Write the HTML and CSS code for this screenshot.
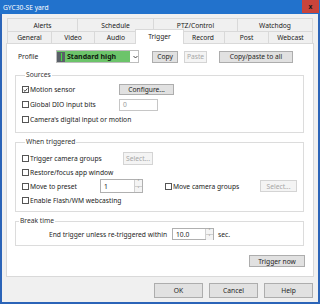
FILE: index.html
```html
<!DOCTYPE html>
<html>
<head>
<meta charset="utf-8">
<link rel="stylesheet" href="styles.css">
</head>
<body>
<div class="window">
  <div class="titlebar">
    <span class="title">GYC30-SE yard</span>
    <span class="close">x</span>
  </div>
  <div class="body">
    <div class="tabs">
      <div class="tabrow top">
        <div class="tab w70">Alerts</div>
        <div class="tab w76">Schedule</div>
        <div class="tab w84">PTZ/Control</div>
        <div class="tab w76 last">Watchdog</div>
      </div>
      <div class="tabrow bottom">
        <div class="tab w44">General</div>
        <div class="tab w43">Video</div>
        <div class="tab w43">Audio</div>
        <div class="tab w45 sel">Trigger</div>
        <div class="tab w42">Record</div>
        <div class="tab w44">Post</div>
        <div class="tab w45 last">Webcast</div>
      </div>
    </div>
    <div class="panel">
      <div class="profile-row">
        <span class="profile-label">Profile</span>
        <div class="combo">
          <div class="combo-sel">
            <span class="combo-icon"><span class="combo-icon-bar"></span></span>
            <span class="combo-text">Standard high</span>
          </div>
          <svg class="combo-arrow" width="5" height="4" viewBox="0 0 5 4"><path d="M0.5 1 L2.5 3 L4.5 1" fill="none" stroke="#333" stroke-width="0.9"/></svg>
        </div>
        <span class="btn b-copy">Copy</span>
        <span class="btn dis b-paste">Paste</span>
        <span class="btn b-all">Copy/paste to all</span>
      </div>

      <fieldset class="group g-sources">
        <legend>Sources</legend>
        <div class="row r15">
          <span class="chk w97"><span class="box checked"><svg width="6" height="6" viewBox="0 0 6 6"><path d="M0.8 3 L2.4 4.6 L5.2 1.2" fill="none" stroke="#222" stroke-width="1"/></svg></span>Motion sensor</span>
          <span class="btn b-conf">Configure...</span>
        </div>
        <div class="row r15">
          <span class="chk w97"><span class="box"></span>Global DIO input bits</span>
          <span class="input in-dio">0</span>
        </div>
        <div class="row r15">
          <span class="chk"><span class="box"></span>Camera's digital input or motion</span>
        </div>
      </fieldset>

      <fieldset class="group g-when">
        <legend>When triggered</legend>
        <div class="row r14">
          <span class="chk w101"><span class="box"></span>Trigger camera groups</span>
          <span class="btn dis b-sel1">Select...</span>
        </div>
        <div class="row r14">
          <span class="chk"><span class="box"></span>Restore/focus app window</span>
        </div>
        <div class="row r14">
          <span class="chk w78"><span class="box"></span>Move to preset</span>
          <span class="input spin sp-preset"><span class="spin-val">1</span><span class="spin-btns"><span class="sb">&#708;</span><span class="sb">&#709;</span></span></span>
          <span class="chk w95 ml22"><span class="box"></span>Move camera groups</span>
          <span class="btn dis b-sel2">Select...</span>
        </div>
        <div class="row r14">
          <span class="chk"><span class="box"></span>Enable Flash/WM webcasting</span>
        </div>
      </fieldset>

      <fieldset class="group g-break">
        <legend>Break time</legend>
        <div class="row r12 break-row">
          <span class="break-text">End trigger unless re-triggered within</span>
          <span class="input spin sp-break"><span class="spin-val">10.0</span><span class="spin-btns"><span class="sb">&#708;</span><span class="sb">&#709;</span></span></span>
          <span class="sec">sec.</span>
        </div>
      </fieldset>

      <div class="trigger-row">
        <span class="btn b-trig">Trigger now</span>
      </div>
    </div>
    <div class="dlg-buttons">
      <span class="btn dlg">OK</span>
      <span class="btn dlg">Cancel</span>
      <span class="btn dlg">Help</span>
    </div>
  </div>
</div>
</body>
</html>
```

FILE: styles.css
```css
html, body {
  margin: 0;
  padding: 0;
  background: #ffffff;
}
body {
  font-family: "Noto Sans", "Open Sans", sans-serif;
  font-size: 6.7px;
  color: #1e1e1e;
}
.window {
  width: 320px;
  height: 304px;
  box-sizing: border-box;
  background: #2b64b8;
  padding: 0 2px 2px 2px;
  display: flex;
  flex-direction: column;
}
.titlebar {
  height: 14px;
  margin: 0 -2px;
  background: #2272cc;
  display: flex;
  align-items: center;
  justify-content: space-between;
}
.title {
  color: #ffffff;
  padding-left: 3px;
}
.close {
  width: 17px;
  height: 13px;
  margin-right: 1px;
  align-self: flex-start;
  background: #c9443b;
  color: #1a1a1a;
  font-weight: bold;
  display: flex;
  align-items: center;
  justify-content: center;
}
.body {
  flex: 1;
  background: #f0f0f0;
  display: flex;
  flex-direction: column;
}
.tabs {
  margin: 4px 0 0 5px;
  width: 306px;
}
.tabrow {
  display: flex;
  height: 13px;
}
.tabrow.bottom {
  height: 12px;
}
.tab {
  box-sizing: border-box;
  border: 1px solid #d9d9d9;
  border-right: none;
  border-bottom: none;
  background: #f0f0f0;
  display: flex;
  align-items: center;
  justify-content: center;
  color: #1a1a1a;
}
.tab.last {
  border-right: 1px solid #d9d9d9;
}
.tab.sel {
  background: #ffffff;
  margin: -2px -2px -1px -2px;
  height: 15px;
  position: relative;
  z-index: 2;
  border-right: 1px solid #d9d9d9;
  padding-bottom: 2px;
}
.tab.sel + .tab { border-left: none; }
.w70 { width: 70px; }
.w76 { width: 76px; }
.w84 { width: 84px; }
.w44 { width: 44px; }
.w43 { width: 43px; }
.w45 { width: 45px; }
.w42 { width: 42px; }
.tab.w45.sel { width: 49px; }

.panel {
  margin-left: 4px;
  width: 308px;
  height: 234px;
  box-sizing: border-box;
  border: 1px solid #d9d9d9;
  background: #ffffff;
  display: flex;
  flex-direction: column;
}
.profile-row {
  display: flex;
  align-items: center;
  height: 13px;
  margin-top: 6px;
}
.profile-label {
  margin-left: 11px;
  width: 38px;
}
.combo {
  width: 83px;
  height: 13px;
  box-sizing: border-box;
  border: 1px solid #bdbdbd;
  display: flex;
  align-items: center;
}
.combo-sel {
  width: 73px;
  height: 11px;
  background: #6cc46a;
  display: flex;
  align-items: center;
}
.combo-icon {
  width: 8px;
  height: 10px;
  background: #5a6068;
  display: flex;
  justify-content: center;
}
.combo-icon-bar {
  width: 1px;
  height: 8px;
  margin-top: 1px;
  background: #40e040;
}
.combo-text {
  font-weight: bold;
  font-size: 7px;
  margin-left: 2px;
  color: #102010;
}
.combo-arrow {
  margin-left: 3px;
}
.btn {
  box-sizing: border-box;
  height: 12px;
  background: #e1e1e1;
  border: 1px solid #adadad;
  display: flex;
  align-items: center;
  justify-content: center;
  color: #1e1e1e;
}
.btn.dis {
  background: #f4f4f4;
  border-color: #d4d4d4;
  color: #a6a6a6;
}
.b-copy { width: 26px; margin-left: 13px; }
.b-paste { width: 23px; margin-left: 6px; }
.b-all { width: 74px; margin-left: 12px; }

.group {
  margin: 0 0 0 8px;
  width: 289px;
  box-sizing: border-box;
  border: 1px solid #dcdcdc;
  padding: 0;
  min-width: 0;
}
.group legend {
  padding: 0 1px;
  margin-left: 3px;
  line-height: 10px;
  height: 10px;
  color: #333;
}
.g-sources {
  margin-top: 7px;
  padding: 2px 0 5px 6px;
}
.g-when {
  margin-top: 4px;
  padding: 4px 0 4px 6px;
}
.g-break {
  margin-top: 4px;
  padding: 2px 0 5px 0;
}
.row {
  display: flex;
  align-items: center;
}
.r15 { height: 15px; }
.r14 { height: 14px; }
.r12 { height: 12px; }
.chk {
  display: flex;
  align-items: center;
  color: #222;
  white-space: nowrap;
}
.box {
  width: 7px;
  height: 7px;
  box-sizing: border-box;
  border: 1px solid #555;
  background: #fff;
  margin-right: 1px;
  display: flex;
  align-items: center;
  justify-content: center;
}
.box svg { display: block; }
.w97 { width: 97px; }
.w101 { width: 101px; }
.w78 { width: 78px; }
.w95 { width: 95px; }
.ml22 { margin-left: 22px; }
.b-conf { width: 55px; height: 11px; }
.input {
  box-sizing: border-box;
  border: 1px solid #c6c6c6;
  background: #fff;
  display: flex;
  align-items: center;
}
.in-dio {
  width: 39px;
  height: 12px;
  padding-left: 3px;
  color: #9a9a9a;
}
.spin {
  border-color: #b0b0b0;
  justify-content: space-between;
}
.spin-val {
  padding-left: 3px;
}
.spin-btns {
  display: flex;
  flex-direction: column;
  width: 7px;
  height: 100%;
  border-left: 1px solid #d0d0d0;
}
.sb {
  flex: 1;
  font-size: 5px;
  line-height: 5px;
  display: flex;
  align-items: center;
  justify-content: center;
  color: #444;
  background: #f4f4f4;
}
.sb + .sb { border-top: 1px solid #d0d0d0; }
.sp-preset { width: 43px; height: 14px; }
.b-sel1 { width: 30px; height: 13px; }
.b-sel2 { width: 37px; height: 12px; }
.break-row {
  padding-left: 33px;
}
.break-text { width: 123px; white-space: nowrap; }
.sp-break { width: 42px; height: 12px; }
.sec { margin-left: 4px; }
.trigger-row {
  display: flex;
  justify-content: flex-end;
  margin-top: 9px;
  padding-right: 8px;
}
.b-trig { width: 56px; height: 12px; }
.dlg-buttons {
  display: flex;
  justify-content: flex-end;
  gap: 6px;
  margin-top: 6px;
  padding-right: 5px;
}
.btn.dlg {
  width: 49px;
  height: 15px;
}
```
